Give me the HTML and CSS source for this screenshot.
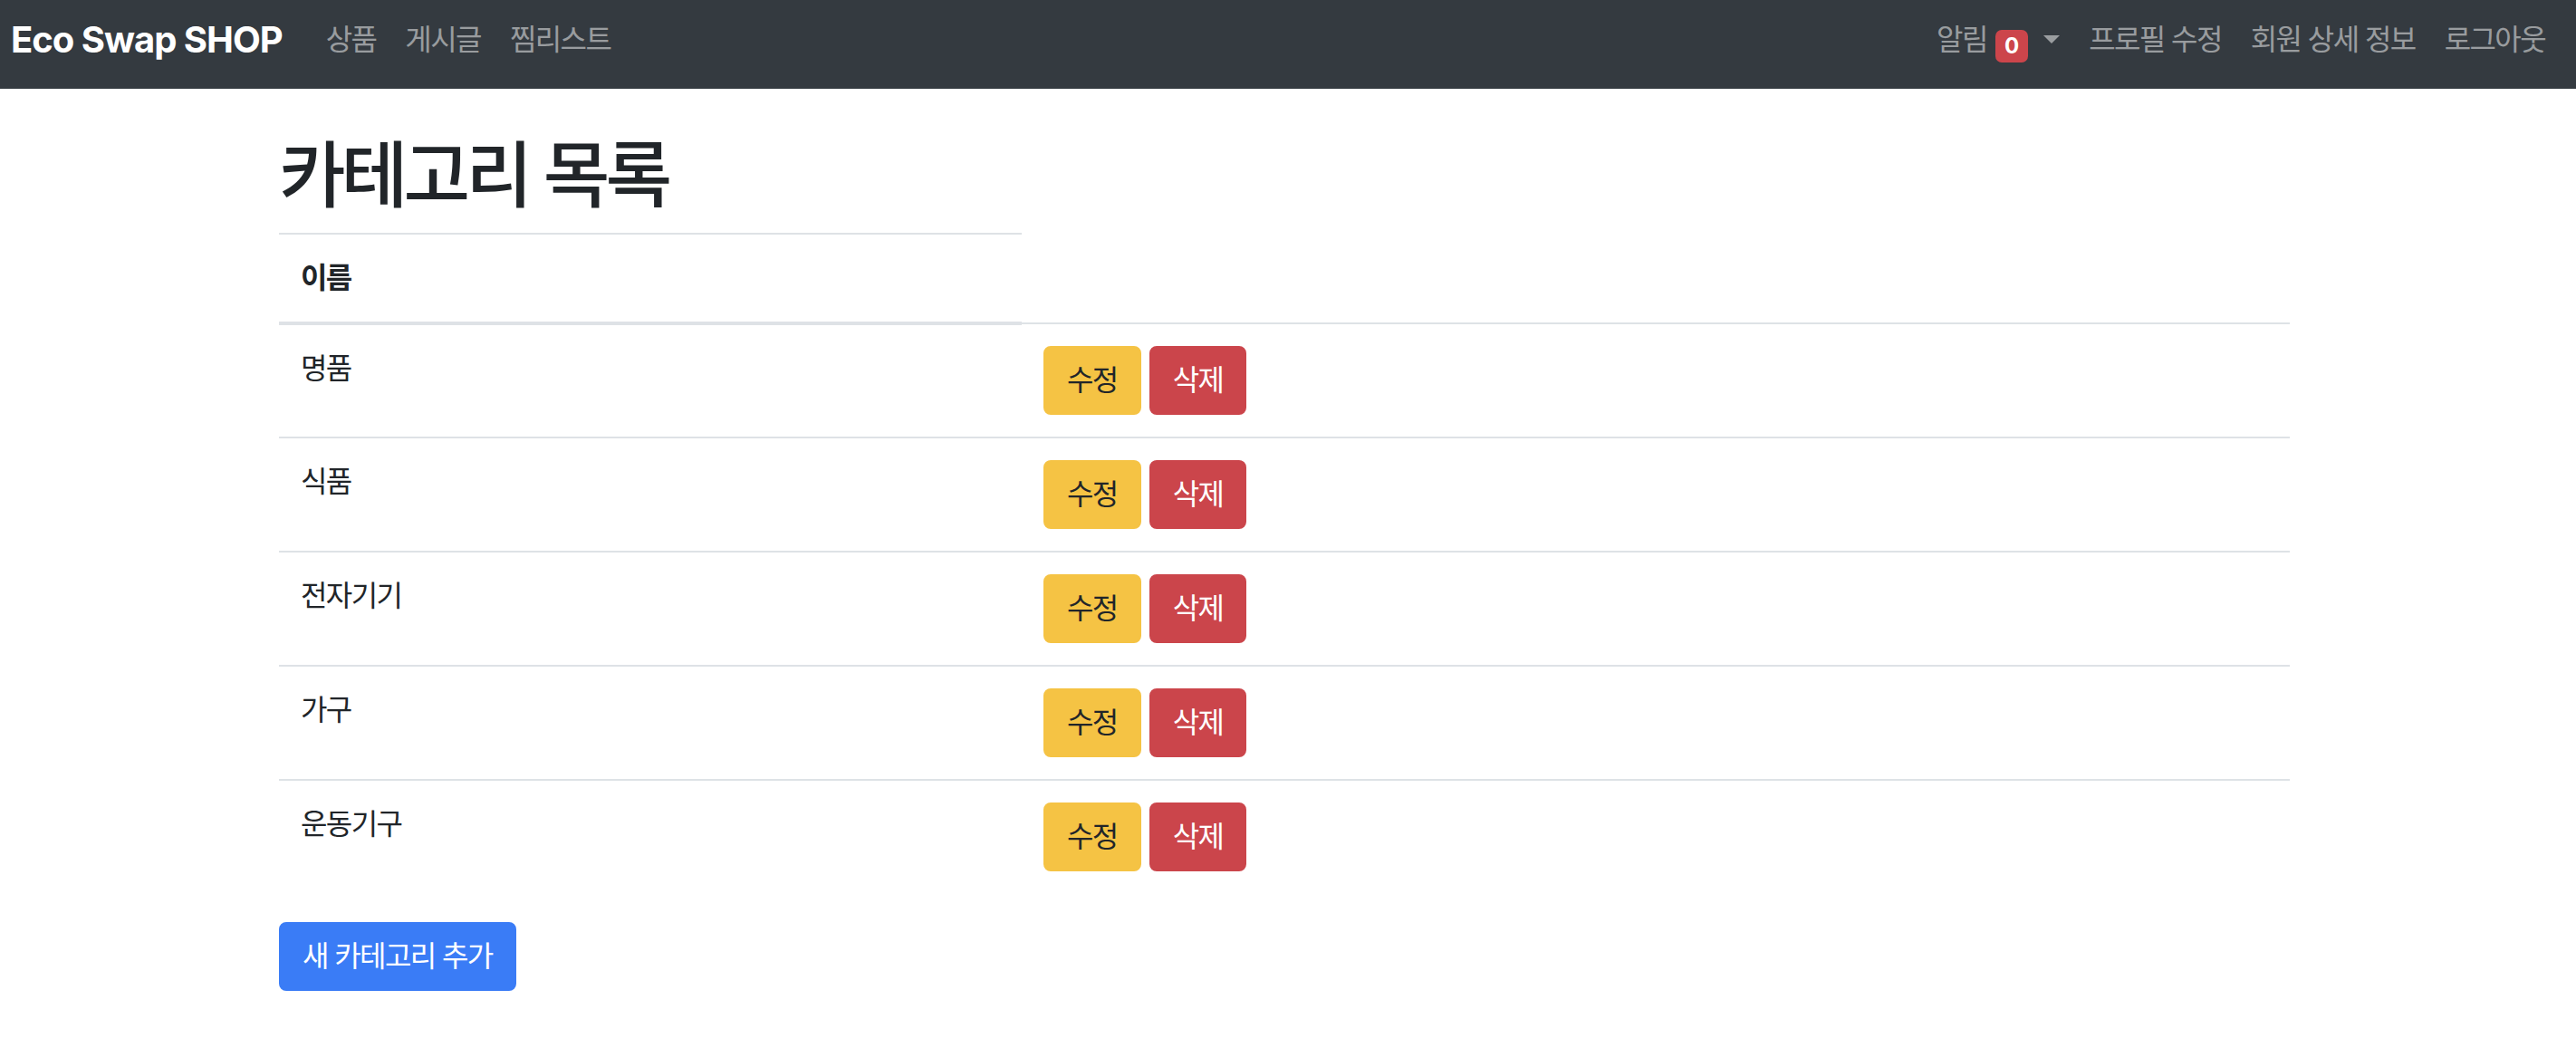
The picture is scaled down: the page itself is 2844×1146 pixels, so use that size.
FILE: index.html
```html
<!DOCTYPE html>
<html lang="ko">
<head>
<meta charset="utf-8">
<title>카테고리 목록</title>
<link rel="stylesheet" href="styles.css">
</head>
<body>
<nav class="navbar">
  <a class="brand" href="#">Eco Swap SHOP</a>
  <ul class="nav">
    <li><a class="nav-link" href="#">상품</a></li>
    <li><a class="nav-link" href="#">게시글</a></li>
    <li><a class="nav-link" href="#">찜리스트</a></li>
  </ul>
  <ul class="nav nav-right">
    <li><a class="nav-link" href="#">알림 <span class="badge">0</span><span class="caret"></span></a></li>
    <li><a class="nav-link" href="#">프로필 수정</a></li>
    <li><a class="nav-link" href="#">회원 상세 정보</a></li>
    <li><a class="nav-link" href="#">로그아웃</a></li>
  </ul>
</nav>
<main class="container">
  <h1 class="title">카테고리 목록</h1>
  <table class="table">
    <thead><tr><th class="col-name">이름</th></tr></thead>
    <tbody>
      <tr><td class="col-name">명품</td><td><div class="actions"><a class="btn btn-warning" href="#">수정</a><a class="btn btn-danger" href="#">삭제</a></div></td></tr>
      <tr><td class="col-name">식품</td><td><div class="actions"><a class="btn btn-warning" href="#">수정</a><a class="btn btn-danger" href="#">삭제</a></div></td></tr>
      <tr><td class="col-name">전자기기</td><td><div class="actions"><a class="btn btn-warning" href="#">수정</a><a class="btn btn-danger" href="#">삭제</a></div></td></tr>
      <tr><td class="col-name">가구</td><td><div class="actions"><a class="btn btn-warning" href="#">수정</a><a class="btn btn-danger" href="#">삭제</a></div></td></tr>
      <tr><td class="col-name">운동기구</td><td><div class="actions"><a class="btn btn-warning" href="#">수정</a><a class="btn btn-danger" href="#">삭제</a></div></td></tr>
    </tbody>
  </table>
  <a class="btn btn-primary" href="#">새 카테고리 추가</a>
</main>
</body>
</html>
```
FILE: styles.css
```css
* { box-sizing: border-box; }
html, body { margin: 0; padding: 0; }
body {
  font-family: Inter, "Noto Sans CJK KR", sans-serif;
  font-size: 32px;
  line-height: 1.5;
  color: #212529;
  background: #fff;
}
a { text-decoration: none; }

.navbar {
  display: flex;
  align-items: center;
  height: 98px;
  padding: 0 18px 10px 12px;
  background: #343a40;
}
.brand {
  color: #fff;
  font-size: 40px;
  font-weight: 700;
  line-height: 60px;
  margin-right: 32px;
  letter-spacing: -1px;
}
.nav {
  display: flex;
  list-style: none;
  margin: 0;
  padding: 0;
}
.nav-right { margin-left: auto; }
.nav-link {
  display: block;
  padding: 0 16px;
  color: rgba(255, 255, 255, 0.5);
  line-height: 48px;
  letter-spacing: -0.05em;
  white-space: nowrap;
}
.badge {
  display: inline-block;
  width: 36px;
  height: 36px;
  line-height: 36px;
  text-align: center;
  font-size: 24px;
  font-weight: 700;
  letter-spacing: 0;
  color: #fff;
  background: #cc454b;
  border-radius: 7px;
  vertical-align: -4px;
  margin-left: 2px;
}
.caret {
  display: inline-block;
  margin-left: 17px;
  width: 0;
  height: 0;
  border-top: 9px solid rgba(255, 255, 255, 0.5);
  border-left: 9px solid transparent;
  border-right: 9px solid transparent;
  vertical-align: 7px;
}

.container {
  width: 2220px;
  margin: 0 0 0 308px;
  padding-top: 47px;
}
.title {
  margin: 0 0 16px;
  font-size: 80px;
  font-weight: 500;
  line-height: 96px;
  letter-spacing: -0.06em;
}
.table {
  width: 100%;
  border-collapse: collapse;
  margin-bottom: 32px;
}
.table th, .table td {
  padding: 24px;
  border-top: 2px solid #dee2e6;
  vertical-align: top;
  text-align: left;
  letter-spacing: -0.05em;
}
.table thead th {
  border-bottom: 4px solid #dee2e6;
  vertical-align: bottom;
  font-weight: 700;
}
.col-name { width: 820px; }
.actions {
  display: flex;
  gap: 9px;
}
.btn {
  display: inline-block;
  padding: 12px 24px;
  font-size: 32px;
  line-height: 48px;
  border: 2px solid transparent;
  border-radius: 8px;
  letter-spacing: -0.05em;
  white-space: nowrap;
}
.btn-warning { background: #f5c344; border-color: #f5c344; color: #212529; }
.btn-danger { background: #cb454b; border-color: #cb454b; color: #fff; }
.btn-primary { background: #3a7cf6; border-color: #3a7cf6; color: #fff; }
```
